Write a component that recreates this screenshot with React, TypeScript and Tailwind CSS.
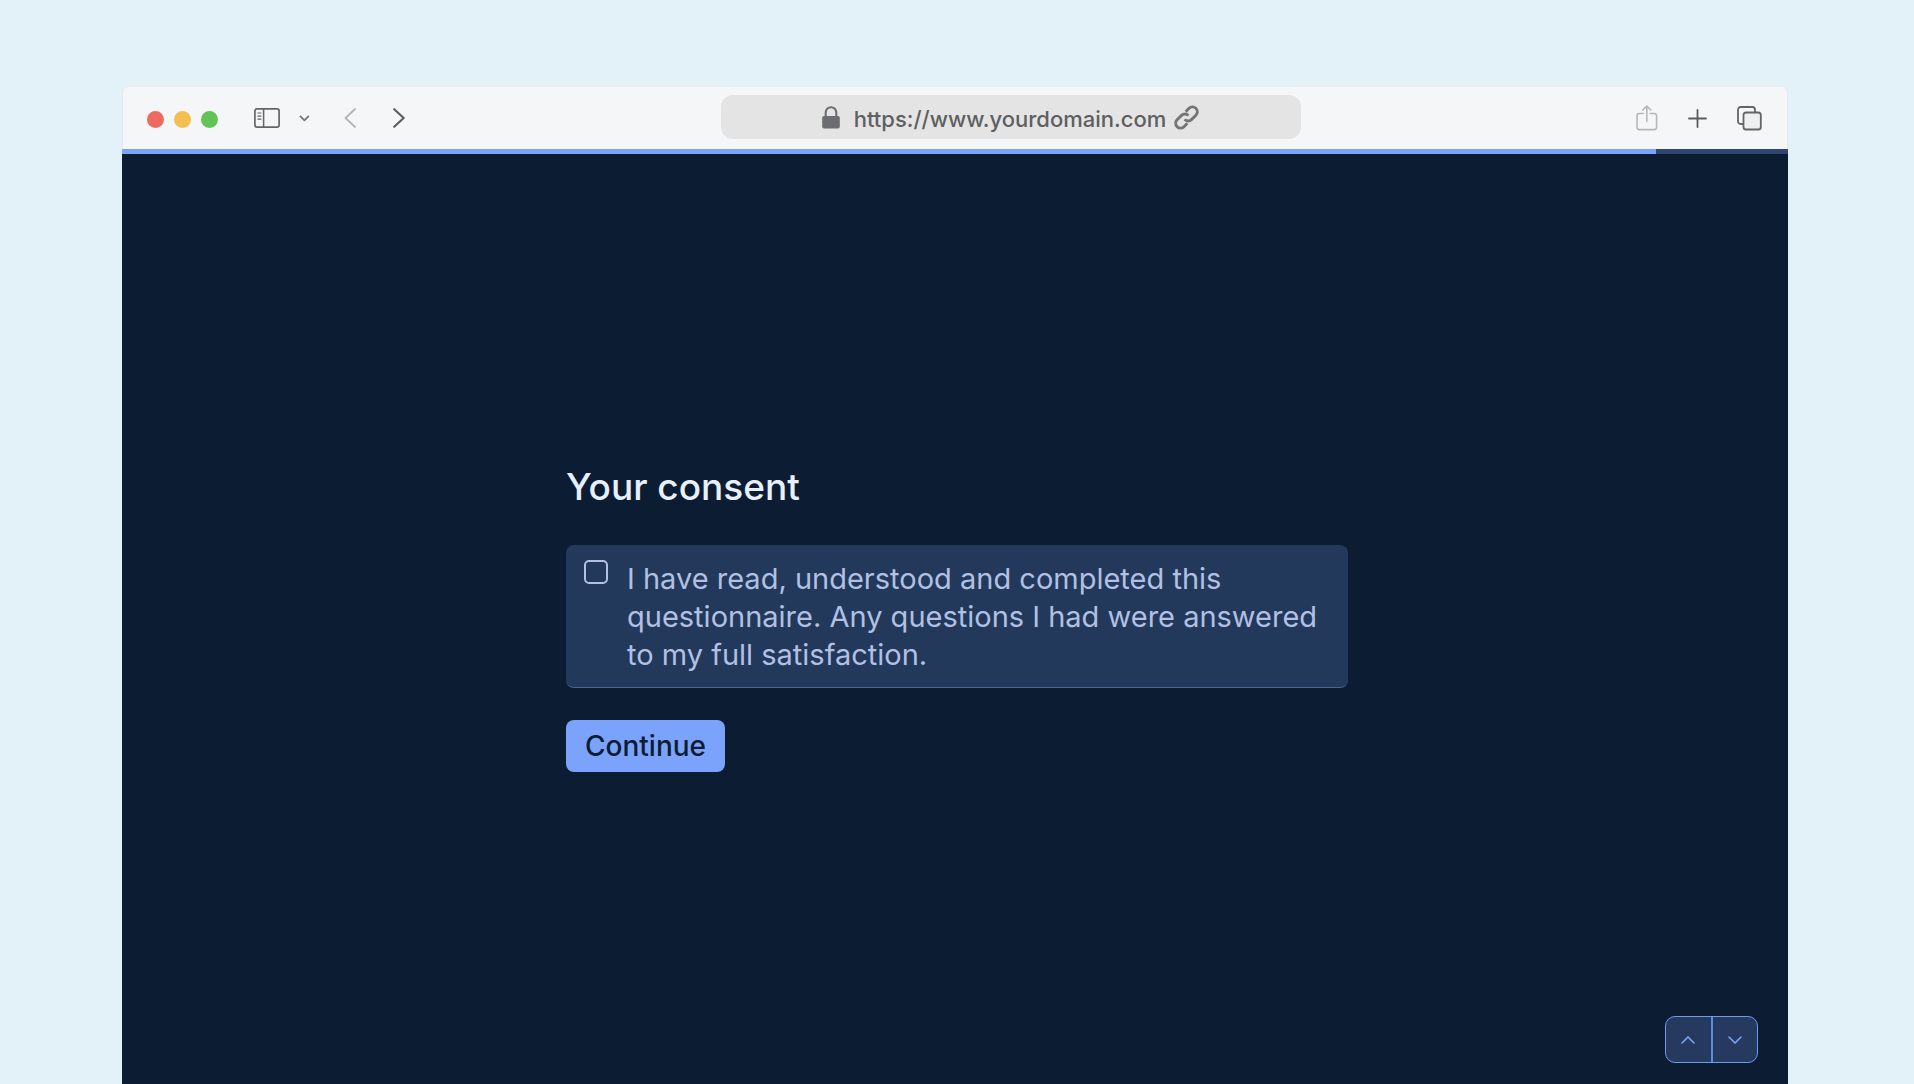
import { useState } from 'react';

const PROGRESS = 92.1;

function SidebarIcon() {
  return (
    <svg width="26" height="20" viewBox="0 0 26 20" fill="none" stroke="#656567">
      <rect x="0.9" y="0.9" width="24.2" height="18.2" rx="2.2" strokeWidth="1.7" />
      <path d="M9.6 1v18" strokeWidth="1.5" />
      <path d="M3.4 5h4M3.4 8.1h4M3.4 11.2h4" strokeWidth="1.2" />
    </svg>
  );
}

function LockIcon() {
  return (
    <svg width="18" height="23" viewBox="0 0 18 23" fill="none">
      <path d="M3.7 11V6.6a5.3 5.3 0 0 1 10.6 0V11" stroke="#6c6d70" strokeWidth="2.1" />
      <rect x="0.2" y="10" width="17.6" height="12.6" rx="1.8" fill="#6c6d70" />
    </svg>
  );
}

function LinkIcon() {
  return (
    <svg width="25" height="25" viewBox="0 0 24 24" fill="none" stroke="#747577" strokeWidth="2.8">
      <path d="M10.2 13.8a4.6 4.6 0 0 0 6.6.2l4.2-4.2a4.65 4.65 0 0 0-6.6-6.6l-3.2 3.2" />
      <path d="M13.8 10.2a4.6 4.6 0 0 0-6.6-.2L3 14.2a4.65 4.65 0 0 0 6.6 6.6l3.2-3.2" />
    </svg>
  );
}

function ShareIcon() {
  return (
    <svg width="22" height="26" viewBox="0 0 22 26" fill="none" stroke="#b6b7b8" strokeWidth="1.6" strokeLinecap="round" strokeLinejoin="round">
      <path d="M7.4 8.5H3.3A2.3 2.3 0 0 0 1 10.8v11.5a2.3 2.3 0 0 0 2.3 2.3h15a2.3 2.3 0 0 0 2.3-2.3V10.8a2.3 2.3 0 0 0-2.3-2.3h-4.1" />
      <path d="M10.8 16.2V1.2M6.9 4.9L10.8 1l3.9 3.9" />
    </svg>
  );
}

function TabsIcon() {
  return (
    <svg width="25" height="25" viewBox="0 0 25 25" fill="none" stroke="#656567" strokeWidth="1.8">
      <path d="M6.5 18H3.6A2.6 2.6 0 0 1 1 15.4V3.6A2.6 2.6 0 0 1 3.6 1h11.8A2.6 2.6 0 0 1 18 3.6v2.9" />
      <rect x="6.5" y="6.5" width="17.3" height="17" rx="2.6" fill="#eeeff0" />
    </svg>
  );
}

function BrowserBar() {
  return (
    <header className="flex h-[62px] items-center justify-between rounded-t-md border-x border-[#e6e8ea] bg-[#f4f6f8] pr-[25px] pl-6">
      <div className="flex items-center">
        <div className="flex gap-[10px] pt-[2px]">
          <span className="size-[17px] rounded-full bg-[#ec6a5f]" />
          <span className="size-[17px] rounded-full bg-[#f4bf50]" />
          <span className="size-[17px] rounded-full bg-[#61c455]" />
        </div>
        <button aria-label="Toggle sidebar" className="ml-9">
          <SidebarIcon />
        </button>
        <button aria-label="Sidebar options" className="ml-[19px]">
          <svg width="11" height="7" viewBox="0 0 11 7" fill="none" stroke="#757577" strokeWidth="1.8" strokeLinecap="round" strokeLinejoin="round">
            <path d="M1.4 1.4l4 4 4-4" />
          </svg>
        </button>
        <button aria-label="Back" className="ml-[34px]">
          <svg width="12" height="20" viewBox="0 0 12 20" fill="none" stroke="#b4b5b6" strokeWidth="1.8" strokeLinecap="round" strokeLinejoin="round">
            <path d="M11 1L1.5 10l9.5 9" />
          </svg>
        </button>
        <button aria-label="Forward" className="ml-[37px]">
          <svg width="12" height="20" viewBox="0 0 12 20" fill="none" stroke="#5c5c5e" strokeWidth="2.1" strokeLinecap="round" strokeLinejoin="round">
            <path d="M1.2 1.2l9.5 8.8-9.5 8.8" />
          </svg>
        </button>
      </div>

      <div className="mb-[2px] flex h-11 w-full max-w-[580px] items-center justify-center rounded-xl bg-[#e4e4e4]">
        <LockIcon />
        <span className="mr-2 ml-[14px] pt-[3px] text-[22px] leading-7 font-medium text-[#5e5f61]">
          https://www.yourdomain.com
        </span>
        <LinkIcon />
      </div>

      <div className="flex items-center gap-[30px] pl-[20px]">
        <button aria-label="Share">
          <ShareIcon />
        </button>
        <button aria-label="New tab">
          <svg width="19" height="19" viewBox="0 0 19 19" fill="none" stroke="#5c5c5e" strokeWidth="1.8" strokeLinecap="round">
            <path d="M9.5 1v17M1 9.5h17" />
          </svg>
        </button>
        <button aria-label="Show tabs">
          <TabsIcon />
        </button>
      </div>
    </header>
  );
}

export default function App() {
  const [agreed, setAgreed] = useState(false);

  return (
    <div className="flex min-h-screen flex-col bg-[#e3f2f9] pt-[87px] pr-[126px] pl-[122px] font-['Inter',sans-serif]">
      <BrowserBar />

      {/* Progress */}
      <div className="h-[5px] bg-[#2f466e]">
        <div className="h-full bg-[#7ba3fb]" style={{ width: `${PROGRESS}%` }} />
      </div>

      <main className="relative flex flex-1 flex-col items-center justify-center bg-[#0c1d33] pb-1 pl-1">
        <form className="w-full max-w-[782px]" onSubmit={(e) => e.preventDefault()}>
          <h1 className="text-[37px] leading-[48px] font-medium text-[#e8f0fe]">Your consent</h1>

          <label className="mt-[34px] flex items-start gap-[19px] rounded-lg border-b border-[#4a658f] bg-[#22395b] px-[18px] pt-[15px] pb-[13px]">
            <input
              type="checkbox"
              checked={agreed}
              onChange={(e) => setAgreed(e.target.checked)}
              className="size-6 shrink-0 appearance-none rounded-[5px] border-2 border-[#b1c0e3] checked:bg-[#7ba3fb]"
            />
            <span className="text-[29px] leading-[38px] text-[#b1c0e3]">
              I have read, understood and completed this questionnaire. Any questions I had were answered to my full
              satisfaction.
            </span>
          </label>

          <button
            type="submit"
            className="mt-8 h-[52px] rounded-lg bg-[#7ba3fb] px-[19px] text-[28px] font-medium text-[#0c1d33]"
          >
            Continue
          </button>
        </form>

        <nav className="absolute right-[30px] bottom-[21px] flex h-[47px] w-[93px] divide-x-2 divide-[#5f8ae0] overflow-hidden rounded-[10px] border border-[#7099ee] bg-[#263a60]">
          <button aria-label="Previous question" className="flex flex-1 items-center justify-center">
            <svg width="14" height="8" viewBox="0 0 14 8" fill="none" stroke="#7ba3fb" strokeWidth="1.6" strokeLinecap="round">
              <path d="M1 7l6-6 6 6" />
            </svg>
          </button>
          <button aria-label="Next question" className="flex flex-1 items-center justify-center">
            <svg width="14" height="8" viewBox="0 0 14 8" fill="none" stroke="#7ba3fb" strokeWidth="1.6" strokeLinecap="round">
              <path d="M1 1l6 6 6-6" />
            </svg>
          </button>
        </nav>
      </main>
    </div>
  );
}
